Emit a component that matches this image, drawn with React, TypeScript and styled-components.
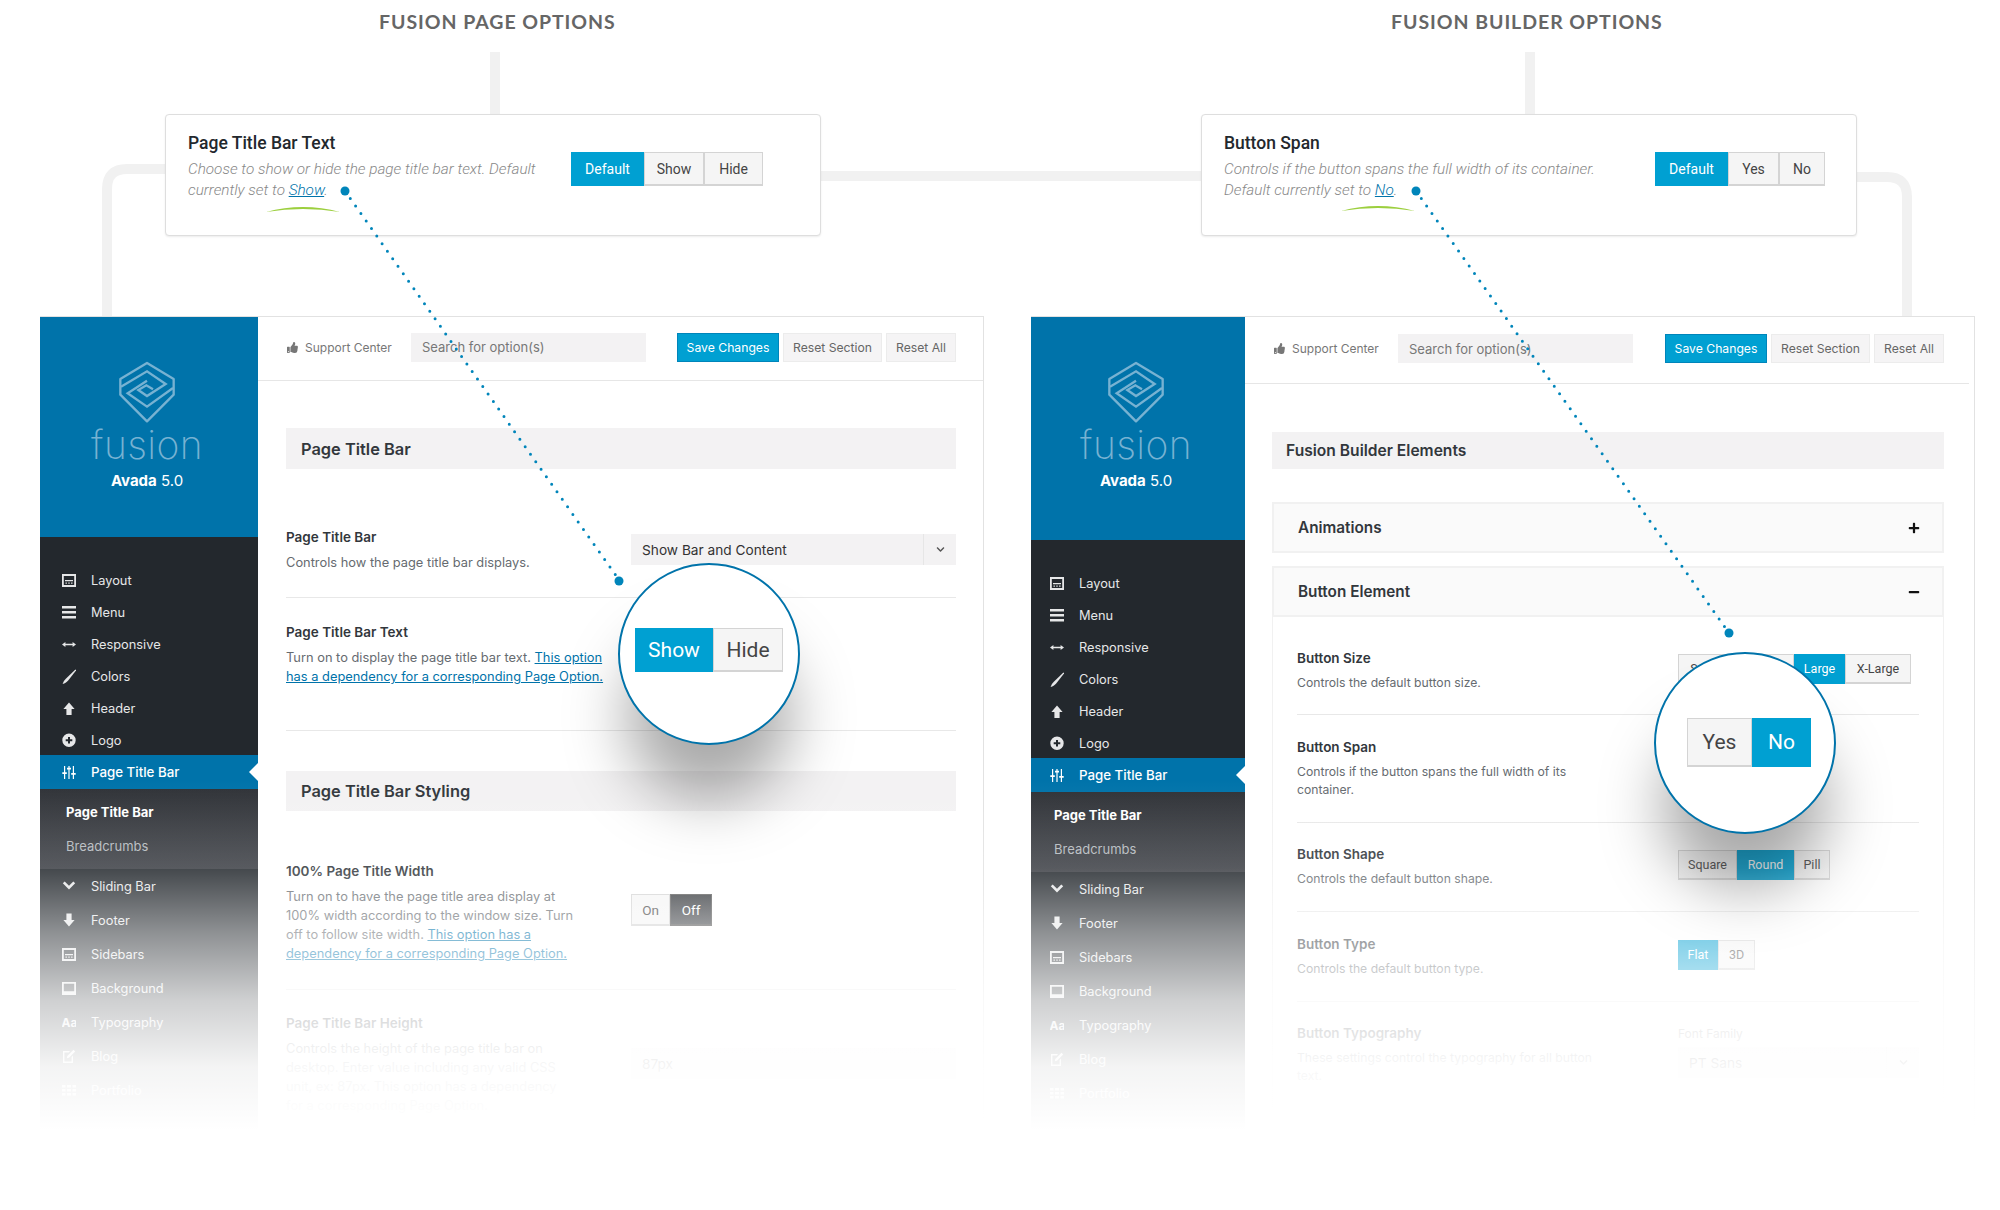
import * as React from 'react';
import styled, { createGlobalStyle } from 'styled-components';
import { FaThumbsUp, FaPlus, FaMinus, FaChevronDown } from 'react-icons/fa';

const Global = createGlobalStyle`
  html, body { margin: 0; padding: 0; background: #fff; }
  body { font-family: Inter, "Liberation Sans", sans-serif; -webkit-font-smoothing: antialiased; }
  * { box-sizing: border-box; }
`;

const BLUE = '#00a0d2';
const WP_BLUE = '#0073aa';
const DARK = '#23282d';

const Page = styled.div`
  position: relative;
  width: 2000px;
  height: 1210px;
  overflow: hidden;
  background: #fff;
  display: flex;
  gap: 47px;
  padding-left: 40px;
`;

const Drawing = styled.svg<{ $z: number }>`
  position: absolute;
  left: 0;
  top: 0;
  pointer-events: none;
  z-index: ${p => p.$z};
`;

const Column = styled.section`
  width: 944px;
  display: flex;
  flex-direction: column;
`;

const Heading = styled.h2<{ $left: number }>`
  margin: 0 0 0 ${p => p.$left}px;
  height: 114px;
  padding-top: 12px;
  font: 700 19.5px/20px Lato, sans-serif;
  letter-spacing: .95px;
  color: #666;
  text-transform: uppercase;
`;

const Card = styled.div<{ $left: number }>`
  position: relative;
  z-index: 1;
  width: 656px;
  height: 122px;
  margin-left: ${p => p.$left}px;
  padding: 18px 24px 0 22px;
  display: flex;
  align-items: flex-start;
  justify-content: space-between;
  background: #fff;
  border: 1px solid #dedede;
  border-radius: 4px;
  box-shadow: 0 1px 2px rgba(0, 0, 0, .08);
  font-family: Roboto, sans-serif;
`;

const CardTitle = styled.h3`
  margin: 0 0 6px;
  font: 500 17.5px/20px Roboto, sans-serif;
  color: #23282d;
`;

const CardDesc = styled.p`
  margin: 0;
  font: italic 300 15.3px/21px Roboto, sans-serif;
  color: #888;
  a { color: ${WP_BLUE}; text-decoration: underline; }
`;

const SegGroup = styled.div<{ $top?: number; $right?: number }>`
  display: flex;
  margin-top: ${p => p.$top ?? 0}px;
  margin-right: ${p => p.$right ?? 0}px;
`;

const Seg = styled.div<{ $on?: boolean; $w: number; $h: number; $size: number; $off?: boolean }>`
  width: ${p => p.$w}px;
  height: ${p => p.$h}px;
  display: flex;
  align-items: center;
  justify-content: center;
  font-size: ${p => p.$size}px;
  font-family: Roboto, sans-serif;
  color: ${p => (p.$on || p.$off ? '#fff' : '#444')};
  background: ${p => (p.$off ? 'linear-gradient(#33363a, #45484d)' : p.$on ? BLUE : '#f5f5f5')};
  border: 1px solid ${p => (p.$off ? '#555' : p.$on ? BLUE : '#d4d4d4')};
  border-bottom-width: 2px;
`;

const Frame = styled.div`
  position: relative;
  margin-top: 80px;
  height: 834px;
  display: flex;
  border-top: 1px solid #e2e2e2;
  border-right: 1px solid #e2e2e2;
`;

const Fade = styled.div`
  position: absolute;
  inset: -1px;
  z-index: 2;
  pointer-events: none;
  background: linear-gradient(to bottom,
    rgba(255, 255, 255, 0) 464px,
    rgba(255, 255, 255, .15) 552px,
    rgba(255, 255, 255, .49) 617px,
    rgba(255, 255, 255, .78) 684px,
    rgba(255, 255, 255, .95) 751px,
    #fff 814px);
`;

const Sidebar = styled.aside<{ $w: number }>`
  flex: 0 0 ${p => p.$w}px;
  background: ${DARK};
  color: #e6e7e8;
`;

const Brand = styled.div<{ $h: number }>`
  height: ${p => p.$h}px;
  background: ${WP_BLUE};
  display: flex;
  flex-direction: column;
  align-items: center;
  padding: 44px 4px 0 0;
`;

const Wordmark = styled.div`
  font: 200 39px/34px Inter, sans-serif;
  letter-spacing: .4px;
  color: #77b2d2;
  margin-top: 5px;
`;

const Version = styled.div`
  margin-top: 9px;
  font-size: 15px;
  line-height: 20px;
  color: #fff;
  b { font-weight: 700; }
`;

const Nav = styled.nav`
  padding-top: 27px;
`;

const NavRow = styled.div<{ $h?: number; $active?: boolean; $inset: number }>`
  position: relative;
  height: ${p => p.$h ?? 32}px;
  margin-top: ${p => (p.$active ? -1 : 0)}px;
  display: flex;
  align-items: center;
  gap: 15px;
  padding-left: ${p => p.$inset}px;
  font-size: ${p => (p.$active ? 13.3 : 12.8)}px;
  font-weight: ${p => (p.$active ? 500 : 400)};
  color: ${p => (p.$active ? '#fff' : 'inherit')};
  background: ${p => (p.$active ? WP_BLUE : 'transparent')};

  ${p =>
    p.$active &&
    `&::after {
      content: '';
      position: absolute;
      right: 0;
      top: 8px;
      border: 9px solid transparent;
      border-right-color: #fff;
      border-left-width: 0;
    }`}
`;

const SubPanel = styled.div`
  height: 80px;
  padding-top: 6px;
  background: linear-gradient(#2f3237, #3b3e44);
`;

const SubItem = styled.div<{ $on?: boolean; $inset: number }>`
  height: 34px;
  display: flex;
  align-items: center;
  padding-left: ${p => p.$inset + 4}px;
  font-size: 13px;
  font-weight: ${p => (p.$on ? 700 : 400)};
  color: ${p => (p.$on ? '#fff' : '#b4b9be')};
`;

const Main = styled.main`
  flex: 1;
  min-width: 0;
  background: #fff;
`;

const Toolbar = styled.div<{ $h: number; $right: number; $end: number; $lift: number }>`
  height: ${p => p.$h}px;
  margin-right: ${p => p.$end}px;
  padding: 0 ${p => p.$right}px ${p => p.$lift}px 29px;
  display: flex;
  align-items: center;
  border-bottom: 1px solid #e6e6e6;
`;

const Support = styled.div`
  width: 124px;
  display: flex;
  align-items: center;
  gap: 7px;
  font-size: 12px;
  color: #777;
  svg { color: #777; }
`;

const Search = styled.div`
  width: 235px;
  height: 29px;
  display: flex;
  align-items: center;
  padding-left: 11px;
  background: #f3f2f3;
  font-size: 13px;
  color: #777;
`;

const Actions = styled.div`
  margin-left: auto;
  display: flex;
  gap: 4px;
`;

const Action = styled.div<{ $w: number; $primary?: boolean }>`
  width: ${p => p.$w}px;
  height: 29px;
  display: flex;
  align-items: center;
  justify-content: center;
  font-size: 12.2px;
  color: ${p => (p.$primary ? '#fff' : '#666')};
  background: ${p => (p.$primary ? BLUE : '#f5f4f5')};
  border: 1px solid ${p => (p.$primary ? '#0085ba' : '#ececec')};
`;

const Content = styled.div<{ $left: number; $right: number }>`
  padding: 0 ${p => p.$right}px 0 ${p => p.$left}px;
`;

const SectionBar = styled.div<{ $top: number; $h: number; $bottom: number; $size: number; $pad: number }>`
  height: ${p => p.$h}px;
  margin-top: ${p => p.$top}px;
  margin-bottom: ${p => p.$bottom}px;
  padding-left: ${p => p.$pad}px;
  display: flex;
  align-items: center;
  background: #f3f2f3;
  font-size: ${p => p.$size}px;
  font-weight: 600;
  color: #32373c;
`;

const Row = styled.div<{ $h: number; $top: number; $col: number; $line?: boolean }>`
  min-height: ${p => p.$h}px;
  padding-top: ${p => p.$top}px;
  display: grid;
  grid-template-columns: ${p => p.$col}px 1fr;
  align-items: start;
  border-bottom: ${p => (p.$line === false ? '0' : '1px solid #e8e8e8')};
`;

const Label = styled.h4`
  margin: 0 0 7px;
  font-size: 13.5px;
  line-height: 17px;
  font-weight: 600;
  color: #32373c;
`;

const Desc = styled.p`
  margin: 0;
  font-size: 12.85px;
  line-height: 19px;
  color: #666b70;
  a { color: ${WP_BLUE}; text-decoration: underline; }
`;

const BuilderDesc = styled(Desc)`
  font-size: 12.2px;
  line-height: 18px;
`;

const Control = styled.div<{ $top: number }>`
  margin-top: ${p => p.$top}px;
`;

const SelectBox = styled.div`
  height: 31px;
  display: flex;
  align-items: center;
  justify-content: space-between;
  padding-left: 11px;
  background: #f3f2f3;
  font-size: 13.7px;
  color: #333;
`;

const SelectArrow = styled.span`
  width: 33px;
  height: 100%;
  display: flex;
  align-items: center;
  justify-content: center;
  border-left: 1px solid #e6e6e6;
  color: #555;
`;

const Accordion = styled.div<{ $top: number }>`
  height: 51px;
  margin-top: ${p => p.$top}px;
  padding: 0 22px 0 24px;
  display: flex;
  align-items: center;
  justify-content: space-between;
  background: #fafafa;
  border: 2px solid #f1f1f1;
  font-size: 15.3px;
  font-weight: 600;
  color: #32373c;
`;

const AccordionBody = styled.div`
  padding: 0 24px 0 24px;
  height: 490px;
  border: 1px solid #f1f1f1;
  border-top: 0;
  border-bottom: 0;
`;

const SmallLabel = styled.div`
  margin-bottom: 6px;
  font-size: 12px;
  line-height: 14px;
  color: #999;
`;

const Lens = styled.div<{ $x: number; $y: number; $dx: number; $dy: number }>`
  position: absolute;
  z-index: 3;
  left: ${p => p.$x}px;
  top: ${p => p.$y}px;
  width: 182px;
  height: 182px;
  display: flex;
  align-items: center;
  justify-content: center;
  padding: 0 0 ${p => p.$dy}px ${p => p.$dx}px;
  background: #fff;
  border: 2px solid ${WP_BLUE};
  border-radius: 50%;
  box-shadow: 0 62px 62px -8px rgba(0, 0, 0, .34);
`;

type IconName =
  | 'layout' | 'menu' | 'responsive' | 'colors' | 'header' | 'logo' | 'sliders'
  | 'chevron' | 'footer' | 'background' | 'type' | 'blog' | 'grid';

const Icon = ({ name }: { name: IconName }) => {
  const shapes: Record<IconName, React.ReactNode> = {
    layout: (
      <path fillRule="evenodd" d="M0 1h14v13H0zM1.800 3v9h10.400V3zM3 7h8v1.200H3zM3.500 9.500h1.400v1.200H3.500zM6.300 9.500h1.400v1.200H6.300zM9.100 9.500h1.400v1.200H9.100z" />
    ),
    menu: <path d="M0 1h14v2.400H0zM0 6h14v2.400H0zM0 11h14v2.400H0z" />,
    responsive: <path d="M0 7.500 3.400 5v1.700h7.200V5L14 7.500 10.600 10V8.300H3.400V10z" />,
    colors: <path d="M13.400.4 14.200 1.200 6 11.800C4.600 13.400 2.800 14.400.6 15 1.400 12.800 2.400 11.200 3.600 10z" />,
    header: <path d="M7 1.400 12.600 8H9.600v6H4.400V8H1.400z" />,
    logo: (
      <path fillRule="evenodd" d="M7 .5a6.700 6.700 0 1 1 0 13.400A6.700 6.700 0 0 1 7 .5zM6 4v2.200H3.700v2H6v2.300h2V8.200h2.300v-2H8V4z" />
    ),
    sliders: (
      <path d="M2 1h1.200v6.200h1.600v1.800H3.200V14H2V9H.3V7.200H2zM6.400 1h1.200v1.800H9v1.800H7.600V14H6.400V4.600H5V2.800h1.400zM10.800 1H12v7h1.700v1.800H12V14h-1.200V9.800H9.200V8h1.600z" />
    ),
    chevron: <path d="M.8 4.200 2.700 2.400 7 6.700l4.300-4.300 1.900 1.800L7 10.400z" />,
    footer: <path d="M4.400 .5h5.200v6.500h3L7 13.500 1.400 7h3z" />,
    background: <path fillRule="evenodd" d="M0 1h14v13H0zM1.800 2.800v7.400h10.400V2.800z" />,
    type: (
      <text x="-0.500" y="12" fontSize="12" fontWeight="700" fontFamily="Inter, sans-serif">Aa</text>
    ),
    blog: (
      <path fillRule="evenodd" d="M1 2h7L6.800 3.400H2.400v9.200h7.200V8L11 6.600V14H1zM11.500 .8l1.700 1.700L7 8.800l-2.200.5.5-2.200z" />
    ),
    grid: (
      <path d="M0 2h3.500v2.500H0zM5 2h4v2.500H5zM10.500 2H14v2.500h-3.500zM0 6h3.500v2.500H0zM5 6h4v2.500H5zM10.500 6H14v2.500h-3.500zM0 10h3.500v2.500H0zM5 10h4v2.500H5zM10.500 10H14v2.500h-3.500z" />
    ),
  };
  return (
    <svg width="14" height="15" viewBox="0 0 14 15" fill="currentColor" aria-hidden="true">
      {shapes[name]}
    </svg>
  );
};

const Logo = () => (
  <svg width="56" height="62" viewBox="86 32 168 184" fill="none" stroke="#77b2d2" strokeWidth="7" aria-hidden="true">
    <path d="M170 37 250 85v47l-80 80-80-80V85z" strokeLinejoin="round" />
    <path d="M92 108 170 62l56 38-56 36-26-18 24-14 20 12" />
    <path d="M170 90 112 128l58 40 78-56" />
  </svg>
);

const topItems: [IconName, string][] = [
  ['layout', 'Layout'],
  ['menu', 'Menu'],
  ['responsive', 'Responsive'],
  ['colors', 'Colors'],
  ['header', 'Header'],
  ['logo', 'Logo'],
];

const lowerItems: [IconName, string][] = [
  ['chevron', 'Sliding Bar'],
  ['footer', 'Footer'],
  ['layout', 'Sidebars'],
  ['background', 'Background'],
  ['type', 'Typography'],
  ['blog', 'Blog'],
  ['grid', 'Portfolio'],
];

const SideNav = ({ width, brand, inset }: { width: number; brand: number; inset: number }) => (
  <Sidebar $w={width}>
    <Brand $h={brand}>
      <Logo />
      <Wordmark>fusion</Wordmark>
      <Version><b>Avada</b> 5.0</Version>
    </Brand>
    <Nav>
      {topItems.map(([icon, text]) => (
        <NavRow key={text} $inset={inset}><Icon name={icon} />{text}</NavRow>
      ))}
      <NavRow $active $h={34} $inset={inset}><Icon name="sliders" />Page Title Bar</NavRow>
      <SubPanel>
        <SubItem $on $inset={inset}>Page Title Bar</SubItem>
        <SubItem $inset={inset}>Breadcrumbs</SubItem>
      </SubPanel>
      {lowerItems.map(([icon, text]) => (
        <NavRow key={text} $h={34} $inset={inset}><Icon name={icon} />{text}</NavRow>
      ))}
    </Nav>
  </Sidebar>
);

const TopBar = ({ h, right, end, lift }: { h: number; right: number; end: number; lift: number }) => (
  <Toolbar $h={h} $right={right} $end={end} $lift={lift}>
    <Support><FaThumbsUp size={11} />Support Center</Support>
    <Search>Search for option(s)</Search>
    <Actions>
      <Action $primary $w={102}>Save Changes</Action>
      <Action $w={99}>Reset Section</Action>
      <Action $w={70}>Reset All</Action>
    </Actions>
  </Toolbar>
);

const PagePanel = () => (
  <Content $left={28} $right={27}>
    <SectionBar $top={47} $h={41} $bottom={34} $size={16.4} $pad={15}>Page Title Bar</SectionBar>
    <Row $h={95} $top={26} $col={345}>
      <div>
        <Label>Page Title Bar</Label>
        <Desc>Controls how the page title bar displays.</Desc>
      </div>
      <Control $top={5}>
        <SelectBox>
          Show Bar and Content
          <SelectArrow><FaChevronDown size={9} /></SelectArrow>
        </SelectBox>
      </Control>
    </Row>
    <Row $h={133} $top={26} $col={345}>
      <div>
        <Label>Page Title Bar Text</Label>
        <Desc>
          Turn on to display the page title bar text. <a>This option</a><br />
          <a>has a dependency for a corresponding Page Option.</a>
        </Desc>
      </div>
    </Row>
    <SectionBar $top={40} $h={40} $bottom={27} $size={16.4} $pad={15}>Page Title Bar Styling</SectionBar>
    <Row $h={152} $top={25} $col={345}>
      <div>
        <Label>100% Page Title Width</Label>
        <Desc>
          Turn on to have the page title area display at<br />
          100% width according to the window size. Turn<br />
          off to follow site width. <a>This option has a</a><br />
          <a>dependency for a corresponding Page Option.</a>
        </Desc>
      </div>
      <Control $top={31}>
        <SegGroup>
          <Seg $w={39} $h={32} $size={13.5}>On</Seg>
          <Seg $off $w={42} $h={32} $size={13.5}>Off</Seg>
        </SegGroup>
      </Control>
    </Row>
    <Row $h={150} $top={25} $col={345} $line={false}>
      <div>
        <Label>Page Title Bar Height</Label>
        <Desc>
          Controls the height of the page title bar on<br />
          desktop. Enter value including any valid CSS<br />
          unit, ex: 87px. This option has a dependency<br />
          for a corresponding Page Option.
        </Desc>
      </div>
      <Control $top={33}>
        <SelectBox>87px</SelectBox>
      </Control>
    </Row>
  </Content>
);

const BuilderPanel = () => (
  <Content $left={27} $right={30}>
    <SectionBar $top={48} $h={37} $bottom={0} $size={15.6} $pad={14}>Fusion Builder Elements</SectionBar>
    <Accordion $top={33}>Animations<FaPlus size={12} color="#111" /></Accordion>
    <Accordion $top={13}>Button Element<FaMinus size={12} color="#111" /></Accordion>
    <AccordionBody>
      <Row $h={98} $top={33} $col={381}>
        <div>
          <Label>Button Size</Label>
          <BuilderDesc>Controls the default button size.</BuilderDesc>
        </div>
        <Control $top={4}>
          <SegGroup>
            <Seg $w={56} $h={30} $size={12.5}>Small</Seg>
            <Seg $w={60} $h={30} $size={12.5}>Medium</Seg>
            <Seg $on $w={51} $h={30} $size={12.5}>Large</Seg>
            <Seg $w={66} $h={30} $size={12.5}>X-Large</Seg>
          </SegGroup>
        </Control>
      </Row>
      <Row $h={108} $top={24} $col={381}>
        <div>
          <Label>Button Span</Label>
          <BuilderDesc>Controls if the button spans the full width of its<br />container.</BuilderDesc>
        </div>
      </Row>
      <Row $h={89} $top={23} $col={381}>
        <div>
          <Label>Button Shape</Label>
          <BuilderDesc>Controls the default button shape.</BuilderDesc>
        </div>
        <Control $top={4}>
          <SegGroup>
            <Seg $w={59} $h={30} $size={12.5}>Square</Seg>
            <Seg $on $w={57} $h={30} $size={12.5}>Round</Seg>
            <Seg $w={36} $h={30} $size={12.5}>Pill</Seg>
          </SegGroup>
        </Control>
      </Row>
      <Row $h={90} $top={24} $col={381}>
        <div>
          <Label>Button Type</Label>
          <BuilderDesc>Controls the default button type.</BuilderDesc>
        </div>
        <Control $top={4}>
          <SegGroup>
            <Seg $on $w={40} $h={30} $size={12.5}>Flat</Seg>
            <Seg $w={37} $h={30} $size={12.5}>3D</Seg>
          </SegGroup>
        </Control>
      </Row>
      <Row $h={100} $top={23} $col={381} $line={false}>
        <div>
          <Label>Button Typography</Label>
          <BuilderDesc>These settings control the typography for all button<br />text.</BuilderDesc>
        </div>
        <Control $top={2}>
          <SmallLabel>Font Family</SmallLabel>
          <SelectBox>
            PT Sans
            <SelectArrow><FaChevronDown size={9} /></SelectArrow>
          </SelectBox>
        </Control>
      </Row>
    </AccordionBody>
  </Content>
);

export default function App() {
  return (
    <Page>
      <Global />
      <Drawing $z={0} width={2000} height={1210} fill="none" stroke="#f1f1f1" strokeWidth={10}>
        <path d="M495 52V114" />
        <path d="M1530 52V114" />
        <path d="M165 169H127Q107 169 107 189V316" />
        <path d="M821 176H1201" />
        <path d="M1857 177H1887Q1907 177 1907 197V316" />
      </Drawing>

      <Column>
        <Heading $left={339}>Fusion Page Options</Heading>
        <Card $left={125}>
          <div>
            <CardTitle>Page Title Bar Text</CardTitle>
            <CardDesc>
              Choose to show or hide the page title bar text. Default<br />
              currently set to <a>Show</a>.
            </CardDesc>
          </div>
          <SegGroup $top={19} $right={33}>
            <Seg $on $w={73} $h={34} $size={14}>Default</Seg>
            <Seg $w={60} $h={34} $size={14}>Show</Seg>
            <Seg $w={59} $h={34} $size={14}>Hide</Seg>
          </SegGroup>
        </Card>
        <Frame>
          <SideNav width={218} brand={220} inset={22} />
          <Main>
            <TopBar h={64} right={27} end={0} lift={3} />
            <PagePanel />
          </Main>
          <Fade />
          <Lens $x={578} $y={246} $dx={0} $dy={8}>
            <SegGroup>
              <Seg $on $w={78} $h={44} $size={21}>Show</Seg>
              <Seg $w={70} $h={44} $size={21}>Hide</Seg>
            </SegGroup>
          </Lens>
        </Frame>
      </Column>

      <Column>
        <Heading $left={360}>Fusion Builder Options</Heading>
        <Card $left={170}>
          <div>
            <CardTitle>Button Span</CardTitle>
            <CardDesc>
              Controls if the button spans the full width of its container.<br />
              Default currently set to <a>No</a>.
            </CardDesc>
          </div>
          <SegGroup $top={19} $right={7}>
            <Seg $on $w={73} $h={34} $size={14}>Default</Seg>
            <Seg $w={51} $h={34} $size={14}>Yes</Seg>
            <Seg $w={46} $h={34} $size={14}>No</Seg>
          </SegGroup>
        </Card>
        <Frame>
          <SideNav width={214} brand={223} inset={19} />
          <Main>
            <TopBar h={67} right={25} end={5} lift={3} />
            <BuilderPanel />
          </Main>
          <Fade />
          <Lens $x={623} $y={335} $dx={8} $dy={1}>
            <SegGroup>
              <Seg $w={65} $h={49} $size={21}>Yes</Seg>
              <Seg $on $w={59} $h={49} $size={21}>No</Seg>
            </SegGroup>
          </Lens>
        </Frame>
      </Column>

      <Drawing $z={5} width={2000} height={1210} fill="none">
        <g stroke="#0085ba" strokeWidth={3} strokeLinecap="round" strokeDasharray="0 9.2">
          <path d="M345 191 617 577" />
          <path d="M1416 191 1727 630" />
        </g>
        <g fill="#0085ba">
          <circle cx={345} cy={191} r={4.5} />
          <circle cx={619} cy={581} r={4.5} />
          <circle cx={1416} cy={191} r={4.5} />
          <circle cx={1729} cy={633} r={4.5} />
        </g>
        <g fill="#9ccf3e">
          <path d="M266 212Q303 202 340 212Q303 206 266 212Z" />
          <path d="M1341 211Q1378 201 1415 211Q1378 205 1341 211Z" />
        </g>
      </Drawing>
    </Page>
  );
}
